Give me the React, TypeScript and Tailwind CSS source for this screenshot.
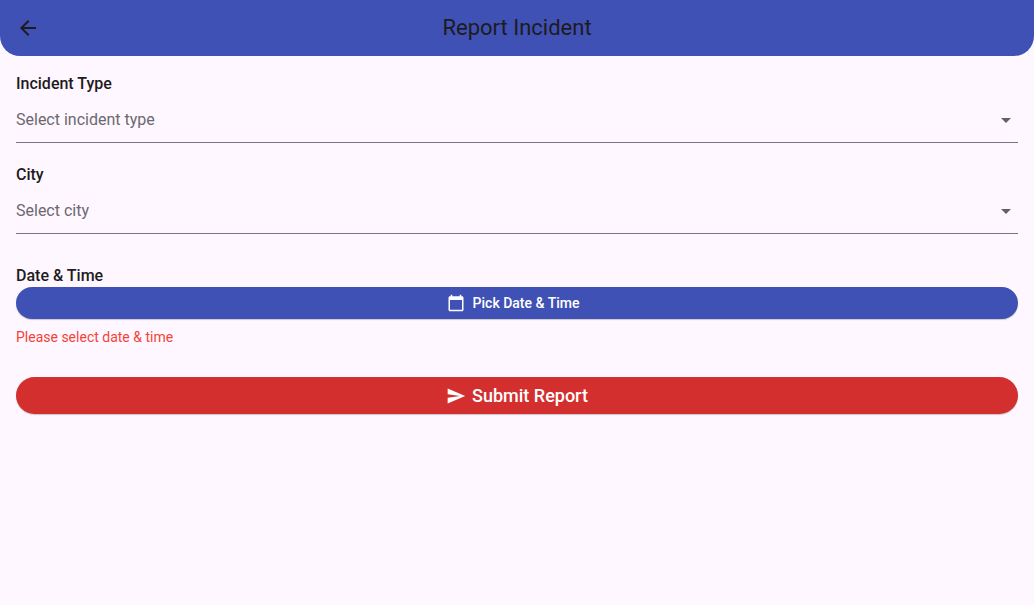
import { useState } from "react";
import type { ReactNode } from "react";

function SelectField({ id, label, placeholder, options }: { id: string; label: string; placeholder: string; options: string[] }) {
  const [value, setValue] = useState("");
  return (
    <div className="flex flex-col gap-0.5">
      <label htmlFor={id} className="text-base leading-6 font-medium text-[#1d1b20]">{label}</label>
      <div className="grid items-center border-b border-[#79747e]">
        <select
          id={id}
          value={value}
          onChange={(e) => setValue(e.target.value)}
          className="col-start-1 row-start-1 h-11 w-full appearance-none bg-transparent text-base text-[#6c686f] outline-none"
        >
          <option value="">{placeholder}</option>
          {options.map((o) => <option key={o}>{o}</option>)}
        </select>
        <svg viewBox="0 0 24 24" className="pointer-events-none col-start-1 row-start-1 size-6 justify-self-end fill-[#616161]" aria-hidden="true">
          <path d="M7 10l5 5 5-5z" />
        </svg>
      </div>
    </div>
  );
}

function Icon({ children, className }: { children: ReactNode; className: string }) {
  return <svg viewBox="0 0 24 24" className={className} fill="currentColor" aria-hidden="true">{children}</svg>;
}

export default function App() {
  return (
    <div className="min-h-screen bg-[#fef7ff] font-['Roboto',sans-serif] text-[#1d1b20]">
      <header className="grid h-14 grid-cols-[56px_1fr_56px] items-center rounded-b-[20px] bg-[#3f51b5]">
        <button type="button" aria-label="Back" className="flex size-14 items-center justify-center">
          <Icon className="size-6"><path d="M20 11H7.83l5.59-5.59L12 4l-8 8 8 8 1.41-1.41L7.83 13H20v-2z" /></Icon>
        </button>
        <h1 className="text-center text-[22px] leading-7">Report Incident</h1>
      </header>
      <form className="flex flex-col px-4 pt-4" onSubmit={(e) => e.preventDefault()}>
        <div className="flex flex-col gap-5">
          <SelectField id="type" label="Incident Type" placeholder="Select incident type" options={["Theft", "Accident", "Fire"]} />
          <SelectField id="city" label="City" placeholder="Select city" options={["Karachi", "Lahore", "Islamabad"]} />
        </div>
        <label htmlFor="pick" className="mt-[31px] text-base leading-[22px] font-medium">Date &amp; Time</label>
        <button id="pick" type="button" className="flex h-8 items-center justify-center gap-2 rounded-full bg-[#3f51b5] pr-6 pl-4 text-sm font-medium text-white shadow-[0_1px_1px_rgba(0,0,0,0.2)]">
          <Icon className="size-[18px]"><path d="M20 3h-1V1h-2v2H7V1H5v2H4c-1.1 0-2 .9-2 2v16c0 1.1.9 2 2 2h16c1.1 0 2-.9 2-2V5c0-1.1-.9-2-2-2zm0 18H4V8h16v13z" /></Icon>
          Pick Date &amp; Time
        </button>
        <p className="mt-2 text-sm leading-5 text-[#f44336]">Please select date &amp; time</p>
        <button type="submit" className="mt-[30px] flex h-[37px] items-center justify-center gap-1.5 rounded-full bg-[#d32f2f] text-lg font-medium text-white shadow-[0_1px_1px_rgba(0,0,0,0.2)]">
          <Icon className="size-5"><path d="M2.01 21L23 12 2.01 3 2 10l15 2-15 2z" /></Icon>
          Submit Report
        </button>
      </form>
    </div>
  );
}
